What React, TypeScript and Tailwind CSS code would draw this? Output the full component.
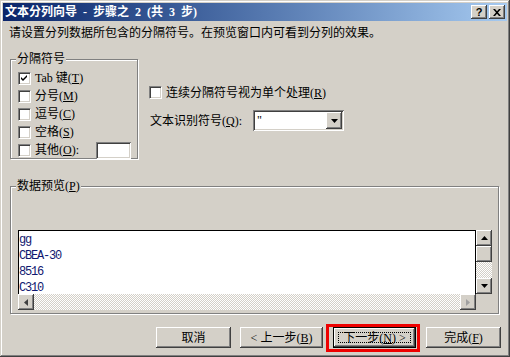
import type { FC, ReactNode } from 'react';

const RAISED =
    'shadow-[inset_-1px_-1px_0_#404040,inset_1px_1px_0_#ffffff,inset_-2px_-2px_0_#808080,inset_2px_2px_0_#d4d0c8]';
const SUNKEN =
    'shadow-[inset_1px_1px_0_#808080,inset_-1px_-1px_0_#ffffff,inset_2px_2px_0_#404040,inset_-2px_-2px_0_#d4d0c8]';
const HATCH =
    'bg-[repeating-conic-gradient(#d4d0c8_0_25%,#ffffff_0_50%)] bg-[length:2px_2px]';

const CheckBox: FC<{ checked?: boolean }> = ({ checked = false }) => (
    <span className="block w-[13px] h-[13px] shrink-0 bg-white border border-t-[#808080] border-l-[#808080] border-b-white border-r-white shadow-[inset_1px_1px_0_#404040,inset_-1px_-1px_0_#d4d0c8]">
        {checked ? (
            <svg width="11" height="11" viewBox="0 0 11 11" className="block">
                <path d="M2 4 L4 6 L8 2 L8 4 L4 8 L2 6 Z" fill="#000" />
            </svg>
        ) : null}
    </span>
);

const GroupBox: FC<{ label: ReactNode; className: string; children: ReactNode }> = ({
    label,
    className,
    children
}) => (
    <div
        className={`border border-[#808080] shadow-[inset_1px_1px_0_#ffffff,1px_1px_0_#ffffff] ${className}`}
    >
        <div className="-mt-[8px] ml-[5px] w-fit px-[1px] bg-[#d4d0c8] leading-[14px]">
            {label}
        </div>
        {children}
    </div>
);

const Arrow: FC<{ dir: 'up' | 'down' | 'left' | 'right'; color?: string }> = ({
    dir,
    color = '#000'
}) => {
    const paths = {
        up: 'M3.5 0 L7 4 L0 4 Z',
        down: 'M0 0 L7 0 L3.5 4 Z',
        left: 'M4 0 L4 7 L0 3.5 Z',
        right: 'M0 0 L4 3.5 L0 7 Z'
    };
    const vertical = dir === 'up' || dir === 'down';
    return (
        <svg
            width={vertical ? 7 : 4}
            height={vertical ? 4 : 7}
            viewBox={vertical ? '0 0 7 4' : '0 0 4 7'}
        >
            <path d={paths[dir]} fill={color} />
        </svg>
    );
};

const ScrollButton: FC<{ dir: 'up' | 'down' | 'left' | 'right'; color?: string }> = ({
    dir,
    color
}) => (
    <div
        className={`w-[16px] h-[16px] shrink-0 flex items-center justify-center bg-[#d4d0c8] ${RAISED}`}
    >
        <Arrow dir={dir} color={color} />
    </div>
);

const Button: FC<{ children: ReactNode; width: string; isDefault?: boolean }> = ({
    children,
    width,
    isDefault = false
}) => (
    <button
        className={`relative h-[21px] ${width} bg-[#d4d0c8] leading-[14px] ${RAISED} ${
            isDefault ? 'border border-black' : ''
        }`}
    >
        {children}
        {isDefault ? (
            <>
                <span className="absolute inset-[4px] border border-dotted border-black pointer-events-none" />
                <span className="absolute -left-[8px] -right-[5px] -top-[4px] -bottom-[5px] border-[3px] border-[#ee0000] pointer-events-none" />
            </>
        ) : null}
    </button>
);

const rows = [
    { label: <>Tab 键(<u>T</u>)</>, checked: true },
    { label: <>分号(<u>M</u>)</> },
    { label: <>逗号(<u>C</u>)</> },
    { label: <>空格(<u>S</u>)</> }
];

const preview = ['gg', 'CBEA-30', '8516', 'C310'];

const App: FC = () => (
    <div className="w-[510px] h-[357px] flex flex-col p-[3px] bg-[#d4d0c8] text-[12px] text-black font-['Liberation_Serif','Noto_Sans_CJK_SC',serif] shadow-[inset_-1px_-1px_0_#404040,inset_1px_1px_0_#d4d0c8,inset_-2px_-2px_0_#808080,inset_2px_2px_0_#ffffff]">
        <div className="h-[18px] shrink-0 flex items-center pl-[2px] pr-[2px] bg-linear-to-r from-[#0a246a] to-[#a6caf0]">
            <span className="font-bold text-white leading-[14px] whitespace-pre">
                {'文本分列向导\u2002-\u2002步骤之\u20022\u2002(共\u20023\u2002步)'}
            </span>
            <div className="ml-auto flex gap-[2px]">
                <div
                    className={`w-[16px] h-[14px] flex items-center justify-center bg-[#d4d0c8] ${RAISED} font-['Liberation_Sans',sans-serif] font-bold text-[11px] leading-[12px]`}
                >
                    ?
                </div>
                <div
                    className={`w-[16px] h-[14px] flex items-center justify-center bg-[#d4d0c8] ${RAISED}`}
                >
                    <svg width="8" height="7" viewBox="0 0 8 7">
                        <path
                            d="M0 0 H2 L4 2.2 L6 0 H8 L5 3.5 L8 7 H6 L4 4.8 L2 7 H0 L3 3.5 Z"
                            fill="#000"
                        />
                    </svg>
                </div>
            </div>
        </div>

        <p className="mt-[5px] ml-[6px] leading-[14px]">
            请设置分列数据所包含的分隔符号。在预览窗口内可看到分列的效果。
        </p>

        <div className="mt-[19px] flex items-start">
            <GroupBox label="分隔符号" className="ml-[7px] w-[128px] h-[100px]">
                <div className="mt-[3px] pl-[7px] pr-[6px] flex flex-col">
                    {rows.map((row, i) => (
                        <div key={i} className="h-[18px] flex items-center gap-[4px]">
                            <CheckBox checked={row.checked} />
                            <span className="leading-[14px]">{row.label}</span>
                        </div>
                    ))}
                    <div className="h-[18px] flex items-center gap-[4px]">
                        <CheckBox />
                        <span className="leading-[14px]">
                            其他(<u>O</u>):
                        </span>
                        <div className={`ml-auto w-[35px] h-[17px] bg-white ${SUNKEN}`} />
                    </div>
                </div>
            </GroupBox>

            <div className="ml-[11px] mt-[27px] flex flex-col">
                <div className="h-[13px] flex items-center gap-[4px]">
                    <CheckBox />
                    <span className="leading-[14px]">
                        连续分隔符号视为单个处理(<u>R</u>)
                    </span>
                </div>
                <div className="mt-[11px] flex items-center">
                    <span className="ml-[1px] w-[103px] leading-[14px]">
                        文本识别符号(<u>Q</u>):
                    </span>
                    <div className={`w-[91px] h-[21px] flex p-[2px] bg-white ${SUNKEN}`}>
                        <span className="flex-1 pl-[2px] leading-[17px]">"</span>
                        <div
                            className={`w-[16px] h-[17px] flex items-center justify-center bg-[#d4d0c8] ${RAISED}`}
                        >
                            <Arrow dir="down" />
                        </div>
                    </div>
                </div>
            </div>
        </div>

        <GroupBox
            label={
                <>
                    数据预览(<u>P</u>)
                </>
            }
            className="mt-[27px] ml-[7px] w-[489px] h-[128px] shrink-0"
        >
            <div className="mt-[37px] ml-[7px] w-[474px] h-[80px] grid grid-cols-[1fr_16px] grid-rows-[1fr_16px]">
                <div className="bg-white border-t border-l border-r border-black pt-[1px] overflow-hidden text-[#101870] leading-[16px] font-['Liberation_Mono',monospace] tracking-[-1.2px]">
                    {preview.map((line) => (
                        <div key={line}>{line}</div>
                    ))}
                </div>
                <div className="flex flex-col">
                    <ScrollButton dir="up" />
                    <div className={`w-[16px] h-[16px] bg-[#d4d0c8] ${RAISED}`} />
                    <div className={`flex-1 ${HATCH}`} />
                    <ScrollButton dir="down" />
                </div>
                <div className="flex">
                    <ScrollButton dir="left" color="#404040" />
                    <div className={`flex-1 ${HATCH}`} />
                    <ScrollButton dir="right" color="#a0a0a0" />
                </div>
                <div className="bg-[#d4d0c8]" />
            </div>
        </GroupBox>

        <div className="mt-[13px] flex">
            <div className="ml-[153px]">
                <Button width="w-[75px]">取消</Button>
            </div>
            <div className="ml-[9px]">
                <Button width="w-[83px]">
                    &lt; 上一步(<u>B</u>)
                </Button>
            </div>
            <div className="ml-[10px]">
                <Button width="w-[83px]" isDefault>
                    下一步(<u>N</u>) &gt;
                </Button>
            </div>
            <div className="ml-[10px]">
                <Button width="w-[75px]">
                    完成(<u>F</u>)
                </Button>
            </div>
        </div>
    </div>
);

export default App;
